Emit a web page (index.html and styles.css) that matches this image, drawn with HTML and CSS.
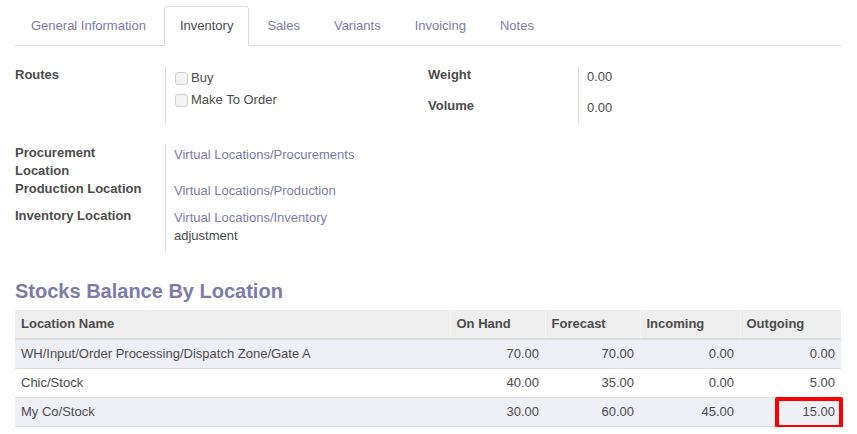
FILE: index.html
```html
<!DOCTYPE html>
<html>
<head>
<meta charset="utf-8">
<link rel="stylesheet" href="styles.css">
</head>
<body>
<div class="page">
  <ul class="tabs">
    <li class="tab">General Information</li>
    <li class="tab active">Inventory</li>
    <li class="tab">Sales</li>
    <li class="tab">Variants</li>
    <li class="tab">Invoicing</li>
    <li class="tab">Notes</li>
  </ul>

  <div class="groups first">
    <div class="group">
      <div class="row r-routes">
        <div class="label">Routes</div>
        <div class="value">
          <div class="check"><span class="box"></span>Buy</div>
          <div class="check"><span class="box"></span>Make To Order</div>
        </div>
      </div>
    </div>
    <div class="group">
      <div class="row r-weight">
        <div class="label">Weight</div>
        <div class="value">0.00</div>
      </div>
      <div class="row r-volume">
        <div class="label">Volume</div>
        <div class="value">0.00</div>
      </div>
    </div>
  </div>

  <div class="groups second">
    <div class="group">
      <div class="row r-proc">
        <div class="label">Procurement<br>Location</div>
        <div class="value"><span class="link">Virtual Locations/Procurements</span></div>
      </div>
      <div class="row r-prod">
        <div class="label">Production Location</div>
        <div class="value"><span class="link">Virtual Locations/Production</span></div>
      </div>
      <div class="row r-inv">
        <div class="label">Inventory Location</div>
        <div class="value"><span class="link block">Virtual Locations/Inventory</span><span class="block">adjustment</span></div>
      </div>
    </div>
    <div class="group"></div>
  </div>

  <h2 class="title">Stocks Balance By Location</h2>
  <table class="stock">
    <colgroup>
      <col class="c-name"><col class="c-num"><col class="c-num"><col class="c-num2"><col>
    </colgroup>
    <thead>
      <tr><th>Location Name</th><th>On Hand</th><th>Forecast</th><th>Incoming</th><th>Outgoing</th></tr>
    </thead>
    <tbody>
      <tr class="odd"><td>WH/Input/Order Processing/Dispatch Zone/Gate A</td><td class="num">70.00</td><td class="num">70.00</td><td class="num">0.00</td><td class="num">0.00</td></tr>
      <tr><td>Chic/Stock</td><td class="num">40.00</td><td class="num">35.00</td><td class="num">0.00</td><td class="num">5.00</td></tr>
      <tr class="odd"><td>My Co/Stock</td><td class="num">30.00</td><td class="num">60.00</td><td class="num">45.00</td><td class="num mark">15.00<span class="highlight"></span></td></tr>
    </tbody>
  </table>
</div>
</body>
</html>
```

FILE: styles.css
```css
* { box-sizing: border-box; }
html, body {
  margin: 0;
  padding: 0;
  background: #fff;
}
body {
  font-family: "Liberation Sans", Arial, sans-serif;
  font-size: 13px;
  line-height: 18px;
  color: #4c4c4c;
}
.page {
  padding: 6px 16px 0 15px;
}

/* Tabs */
.tabs {
  list-style: none;
  margin: 0;
  padding: 0;
  display: flex;
  border-bottom: 1px solid #dddddd;
}
.tab {
  padding: 10px 15px;
  margin-right: 2px;
  margin-bottom: -1px;
  border: 1px solid transparent;
  border-radius: 4px 4px 0 0;
  color: #7c7bad;
  white-space: nowrap;
}
.tab.active {
  color: #4c4c4c;
  background: #fff;
  border-color: #dddddd;
  border-bottom-color: #fff;
}

/* Groups */
.groups {
  display: grid;
  grid-template-columns: 413px 1fr;
}
.groups.first { margin-top: 20px; }
.groups.second { margin-top: 20px; }
.row {
  display: flex;
}
.label {
  width: 150px;
  flex: none;
  font-weight: bold;
  color: #4c4c4c;
}
.value {
  flex: 1;
  border-left: 1px solid #dcdcdc;
  padding-left: 8px;
  color: #4c4c4c;
}
.r-routes .value { padding-top: 1px; padding-bottom: 13px; }
.check {
  display: flex;
  align-items: center;
  height: 22px;
}
.box {
  width: 13px;
  height: 13px;
  margin-left: 1px;
  margin-right: 3px;
  border: 1px solid #cfcfcf;
  border-radius: 3px;
  background: #f3f3f3;
}
.r-weight .value { padding-top: 2px; padding-bottom: 11px; }
.r-volume .value { padding-top: 2px; padding-bottom: 7px; }

.r-proc .value { padding-top: 2px; }
.r-prod .label { padding-bottom: 9px; }
.r-prod .value { padding-top: 2px; }
.r-inv .value { padding-top: 2px; padding-bottom: 7px; }
.link { color: #7c7bad; }
.block { display: block; }

/* Title */
.title {
  margin: 28px 0 8px 0;
  font-size: 20px;
  line-height: 22px;
  font-weight: bold;
  color: #7c7bad;
}

/* Table */
.stock {
  width: 826px;
  border-collapse: collapse;
  table-layout: fixed;
}
.c-name { width: 435px; }
.c-num { width: 95px; }
.c-num2 { width: 100px; }
.stock th {
  background: #eeeeee;
  text-align: left;
  font-weight: bold;
  padding: 5px 6px;
  border-bottom: 2px solid #dddddd;
  border-left: 1px solid #f6f6f6;
  white-space: nowrap;
}
.stock th:first-child { border-left: none; }
.stock td {
  padding: 5px 6px;
  border-top: 1px solid #dddddd;
  white-space: nowrap;
}
.stock tbody tr:last-child td { border-bottom: 1px solid #dddddd; }
.stock tr.odd td { background: #efeff6; }
.stock td.num { text-align: right; }
.stock td.mark { position: relative; }
.highlight {
  position: absolute;
  left: 35px;
  top: -1px;
  width: 68px;
  height: 32px;
  border: 4px solid #ff0000;
  border-radius: 2px;
}
```
